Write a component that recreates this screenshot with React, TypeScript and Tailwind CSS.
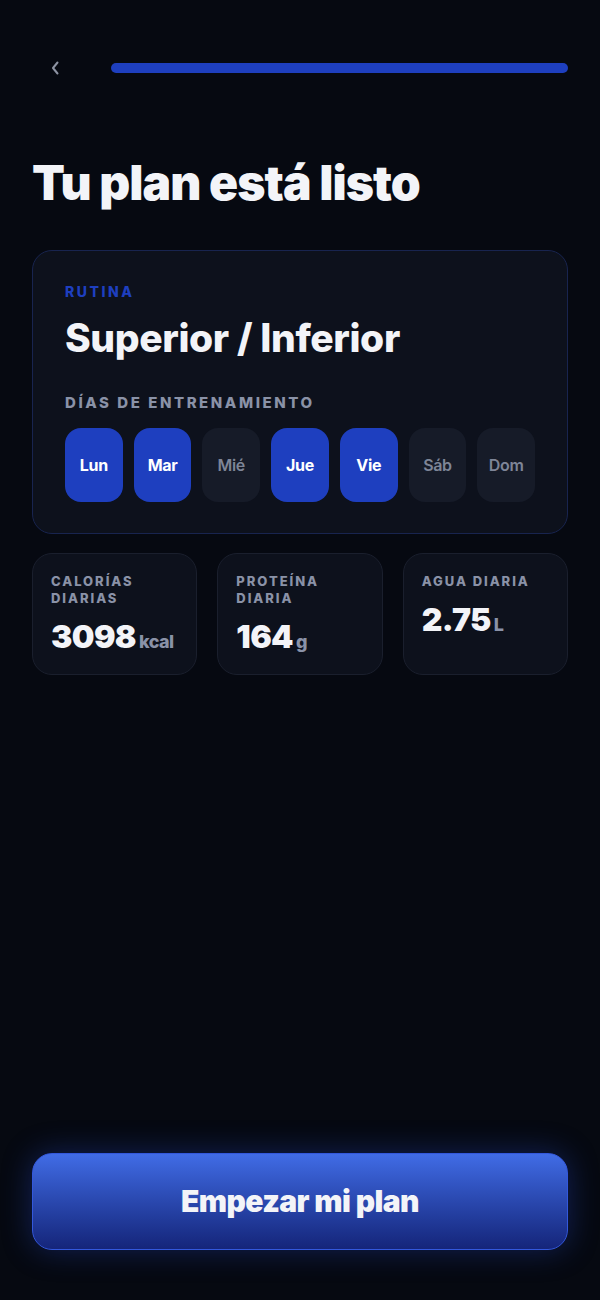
const DAYS = [
  { label: "Lun", active: true },
  { label: "Mar", active: true },
  { label: "Mié", active: false },
  { label: "Jue", active: true },
  { label: "Vie", active: true },
  { label: "Sáb", active: false },
  { label: "Dom", active: false },
];

const STATS = [
  { label: "CALORÍAS DIARIAS", value: "3098", unit: "kcal" },
  { label: "PROTEÍNA DIARIA", value: "164", unit: "g" },
  { label: "AGUA DIARIA", value: "2.75", unit: "L" },
];

function StatCard({ label, value, unit }: { label: string; value: string; unit: string }) {
  return (
    <div className="flex h-[122px] flex-col rounded-[20px] border border-[#1a1f2d] bg-[#0d111c] px-[18px] pt-[19px]">
      <p className="w-[120px] text-[13px] font-extrabold leading-[17px] tracking-[0.15em] text-[#8a92a7]">{label}</p>
      <p className="mt-[14px] flex items-baseline gap-[3px]">
        <span className="text-[32px] font-black leading-none tracking-[-0.02em] text-[#f3f4f8]">{value}</span>
        <span className="text-[18px] font-extrabold leading-none tracking-[-0.03em] text-[#8a92a7]">{unit}</span>
      </p>
    </div>
  );
}

export default function App() {
  return (
    <div className="flex min-h-[1300px] flex-col bg-[#060911] px-8 font-['Inter','Liberation_Sans',sans-serif]">
      <header className="mt-[59px] flex h-[18px] items-center">
        <button type="button" aria-label="Atrás" className="ml-[18px] flex w-[12px] items-center text-[#8d93a3]">
          <svg width="10" height="16" viewBox="0 0 10 16" fill="none">
            <path d="M7.5 2.5L3 8l4.5 5.5" stroke="currentColor" strokeWidth="2" strokeLinecap="round" strokeLinejoin="round" />
          </svg>
        </button>
        <div className="ml-[49px] h-[10px] flex-1 rounded-full bg-[#1e3fbf]" />
      </header>

      <h1 className="mt-[82px] text-[48px] font-black leading-none tracking-[-0.02em] text-[#f3f4f8]">
        Tu plan está listo
      </h1>

      <section className="mt-[43px] rounded-[20px] border border-[#18244f] bg-[#0d111c] px-8 pt-[34px] pb-[31px]">
        <p className="text-[14px] font-extrabold leading-none tracking-[0.18em] text-[#1e3fbf]">RUTINA</p>
        <p className="mt-[19px] text-[39px] font-extrabold leading-none tracking-[-0.01em] text-[#f3f4f8]">Superior / Inferior</p>
        <p className="mt-[38px] text-[15px] font-extrabold leading-none tracking-[0.17em] text-[#8a92a7]">DÍAS DE ENTRENAMIENTO</p>
        <div className="mt-[18px] flex gap-[11px]">
          {DAYS.map((d) => (
            <div
              key={d.label}
              className={
                d.active
                  ? "flex h-[74px] w-[58px] items-center justify-center rounded-[16px] bg-[#1e3fbf] text-[16px] font-bold tracking-[-0.02em] text-white"
                  : "flex h-[74px] w-[58px] items-center justify-center rounded-[16px] bg-[#161b28] text-[16px] font-semibold tracking-[-0.02em] text-[#7e8597]"
              }>
              {d.label}
            </div>
          ))}
        </div>
      </section>

      <div className="mt-[19px] grid grid-cols-3 gap-[20px]">
        {STATS.map((s) => (
          <StatCard key={s.label} {...s} />
        ))}
      </div>

      <div className="flex-1" />

      <button
        type="button"
        className="mb-[50px] h-[97px] w-full rounded-[20px] border border-[#3358dc] bg-gradient-to-b from-[#416ce6] to-[#15257a] text-[30px] font-black tracking-[-0.02em] text-[#f3f4f8] shadow-[0_0_30px_rgba(40,80,220,0.35)]">
        Empezar mi plan
      </button>
    </div>
  );
}
